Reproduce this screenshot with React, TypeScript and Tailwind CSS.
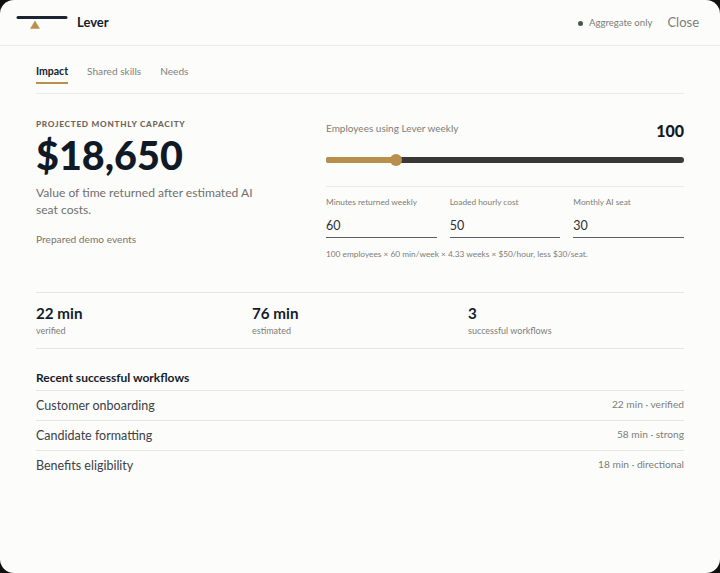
export default function App() {
  return (
    <div className="h-[573px] w-[720px] bg-[#111111] overflow-hidden font-['Lato',sans-serif]">
      <div className="h-full rounded-[14px] bg-[#fcfcfa] flex flex-col">
        <header className="h-[46px] shrink-0 border-b border-[#ebebe8] flex items-center justify-between pl-[16px] pr-[21px]">
          <div className="flex items-center gap-[9px]">
            <svg width="52" height="30" viewBox="0 0 52 30" className="mt-[1px]">
              <rect x="0.5" y="8" width="51" height="3" rx="1.5" fill="#1b2433" />
              <path d="M14.5 20.5 L19 13 L23.5 20.5 Z" fill="#b98f4e" stroke="#b98f4e" strokeWidth="0.5" />
            </svg>
            <span className="text-[13px] font-bold text-[#141d2b]">Lever</span>
          </div>
          <div className="flex items-center">
            <span className="w-[5px] h-[5px] rounded-full bg-[#47574e] mr-[6px] mt-[1px]" />
            <span className="text-[9.6px] mt-[2px] text-[#7d7d7a]">Aggregate only</span>
            <span className="text-[13px] text-[#7d7d7a] ml-[15px]">Close</span>
          </div>
        </header>
        <main className="flex-1 px-[36px] flex flex-col">
          <nav className="h-[48px] border-b border-[#e9e9e6] flex items-start gap-[19px] pt-[18px]">
            <div className="flex flex-col h-[20px] justify-start border-b-2 border-[#b98f4e]">
              <span className="text-[10.5px] font-bold leading-[15px] text-[#141d2b]">Impact</span>
            </div>
            <span className="text-[10.1px] leading-[15px] text-[#82827f]">Shared skills</span>
            <span className="text-[10.1px] leading-[15px] text-[#82827f]">Needs</span>
          </nav>
          <section className="flex h-[199px] border-b border-[#e6e6e3] pt-[25px]">
            <div className="w-[290px] shrink-0 -mt-[1px]">
              <div className="text-[8.2px] font-black leading-[12px] tracking-[0.09em] text-[#70665a]">PROJECTED MONTHLY CAPACITY</div>
              <div className="text-[39.5px] font-black leading-[46px] mt-[2px] text-[#101a27]">$18,650</div>
              <p className="text-[12.1px] leading-[17px] text-[#70706d] mt-[6px] w-[235px]">Value of time returned after estimated AI seat costs.</p>
              <div className="text-[10.2px] leading-[14px] text-[#7c7468] mt-[14px]">Prepared demo events</div>
            </div>
            <div className="flex-1">
              <div className="flex justify-between items-start h-[26px]">
                <span className="text-[10px] leading-[14px] mt-[2px] text-[#7d7d7a]">Employees using Lever weekly</span>
                <span className="text-[16px] leading-[20px] font-black text-[#101a27] mt-[2px]">100</span>
              </div>
              <div className="relative h-[10px] mt-[10px] flex items-center">
                <div className="h-[6px] w-full rounded-full bg-[#383838]" />
                <div className="absolute left-0 h-[6px] w-[70px] rounded-full bg-[#b98f4e]" />
                <div className="absolute left-[64px] w-[12px] h-[12px] rounded-full bg-[#b98f4e]" />
              </div>
              <div className="border-t border-[#e9e9e6] mt-[21px] pt-[9px] grid grid-cols-3 gap-x-[13px]">
                {[["Minutes returned weekly", "60"], ["Loaded hourly cost", "50"], ["Monthly AI seat", "30"]].map(([l, v]) => (
                  <div key={l}>
                    <div className="text-[8.3px] leading-[13px] text-[#7d7d7a]">{l}</div>
                    <div className="text-[12.5px] leading-[18px] mt-[8px] pb-[2px] text-[#2b2f36] border-b-[1.5px] border-[#5e5e66]">{v}</div>
                  </div>
                ))}
              </div>
              <div className="text-[8.3px] leading-[12px] text-[#7d7d7a] mt-[10px]">100 employees × 60 min/week × 4.33 weeks × $50/hour, less $30/seat.</div>
            </div>
          </section>
          <section className="grid grid-cols-3 h-[56px] border-b border-[#e6e6e3] pt-[10px]">
            {[["22 min", "verified"], ["76 min", "estimated"], ["3", "successful workflows"]].map(([a, b]) => (
              <div key={b}>
                <div className="text-[15.2px] leading-[20px] font-bold text-[#141d2b]">{a}</div>
                <div className="text-[9px] leading-[13px] mt-[1px] text-[#7d7d7a]">{b}</div>
              </div>
            ))}
          </section>
          <h3 className="text-[12px] font-bold leading-[15px] text-[#141d2b] mt-[21px] h-[20px]">Recent successful workflows</h3>
          {[["Customer onboarding", "22 min · verified"], ["Candidate formatting", "58 min · strong"], ["Benefits eligibility", "18 min · directional"]].map(([a, b]) => (
            <div key={a} className="h-[30px] border-t border-[#e6e6e3] flex items-center justify-between">
              <span className="text-[12.5px] mt-[1px] text-[#3d4045]">{a}</span>
              <span className="text-[10.2px] -mt-[1px] text-[#7d7d7a]">{b}</span>
            </div>
          ))}
        </main>
      </div>
    </div>
  );
}
